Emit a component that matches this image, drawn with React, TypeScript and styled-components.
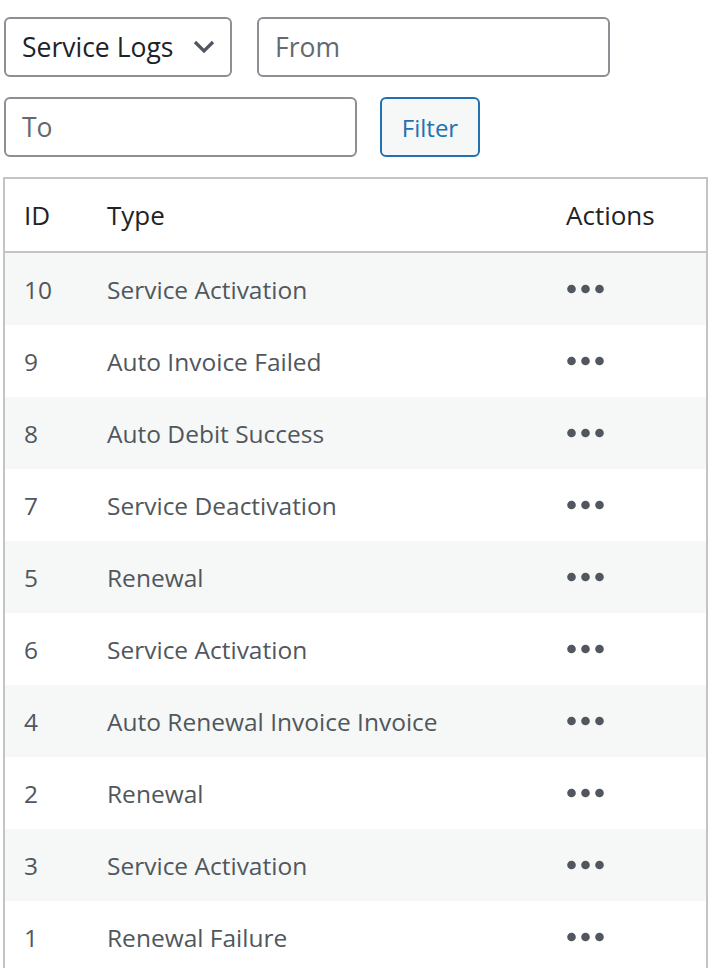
import React from "react";
import styled, { createGlobalStyle } from "styled-components";

const Global = createGlobalStyle`
  html, body { margin: 0; padding: 0; background: #fff; }
  body { font-family: "Open Sans", "Noto Sans", sans-serif; }
  * { box-sizing: border-box; }
`;

const Page = styled.div`
  padding: 17px 6px 0 3px;
  width: 714px;
`;

const FilterBar = styled.div`
  display: flex;
  flex-wrap: wrap;
  column-gap: 23px;
  row-gap: 20px;
  padding-left: 1px;
  margin-bottom: 20px;
  width: 640px;
`;

const Field = styled.div<{ $w: number }>`
  width: ${(p) => p.$w}px;
  height: 60px;
  border: 2px solid #8c8f94;
  border-radius: 6px;
  display: flex;
  align-items: center;
  padding: 0 16px;
  font-size: 26.5px;
  color: #1d2327;
  background: #fff;
`;

const Placeholder = styled.span`
  color: #646970;
`;

const SelectBox = styled(Field)`
  justify-content: space-between;
  padding-right: 15px;
  margin-right: 2px;
`;

const Button = styled.button`
  height: 60px;
  width: 100px;
  border: 2px solid #2271b1;
  border-radius: 6px;
  background: #f6f7f7;
  color: #2271b1;
  font-family: inherit;
  font-size: 24px;
  padding: 0;
`;

const Table = styled.div`
  border: 2px solid #c3c4c7;
  border-bottom: none;
  width: 705px;
`;

const Row = styled.div<{ $head?: boolean; $alt?: boolean }>`
  display: grid;
  grid-template-columns: 83px 459px 1fr;
  align-items: center;
  height: ${(p) => (p.$head ? "74px" : "72px")};
  background: ${(p) => (p.$alt ? "#f6f7f7" : "#fff")};
  border-bottom: ${(p) => (p.$head ? "2px solid #c3c4c7" : "none")};
  color: ${(p) => (p.$head ? "#1d2327" : "#50575e")};
  font-size: ${(p) => (p.$head ? "26px" : "24.5px")};
  padding-left: 19px;
`;

const Cell = styled.div``;

const Dots = () => (
  <svg width="40" height="10" viewBox="0 0 40 10" style={{ display: "block", marginLeft: 1 }}>
    <circle cx="4.5" cy="5" r="4.3" fill="#50575e" />
    <circle cx="18.5" cy="5" r="4.3" fill="#50575e" />
    <circle cx="32.5" cy="5" r="4.3" fill="#50575e" />
  </svg>
);

const Chevron = () => (
  <svg width="22" height="14" viewBox="0 0 22 14">
    <path d="M2 2 L11 11 L20 2" stroke="#50575e" strokeWidth="3.2" fill="none" />
  </svg>
);

const rows: [string, string][] = [
  ["10", "Service Activation"],
  ["9", "Auto Invoice Failed"],
  ["8", "Auto Debit Success"],
  ["7", "Service Deactivation"],
  ["5", "Renewal"],
  ["6", "Service Activation"],
  ["4", "Auto Renewal Invoice Invoice"],
  ["2", "Renewal"],
  ["3", "Service Activation"],
  ["1", "Renewal Failure"],
];

export default function App() {
  return (
    <>
      <Global />
      <Page>
        <FilterBar>
          <SelectBox $w={228}>
            <span>Service Logs</span>
            <Chevron />
          </SelectBox>
          <Field $w={353}>
            <Placeholder>From</Placeholder>
          </Field>
          <Field $w={353}>
            <Placeholder>To</Placeholder>
          </Field>
          <Button>Filter</Button>
        </FilterBar>
        <Table>
          <Row $head>
            <Cell>ID</Cell>
            <Cell>Type</Cell>
            <Cell>Actions</Cell>
          </Row>
          {rows.map(([id, type], i) => (
            <Row key={i} $alt={i % 2 === 0}>
              <Cell>{id}</Cell>
              <Cell>{type}</Cell>
              <Cell>
                <Dots />
              </Cell>
            </Row>
          ))}
        </Table>
      </Page>
    </>
  );
}
